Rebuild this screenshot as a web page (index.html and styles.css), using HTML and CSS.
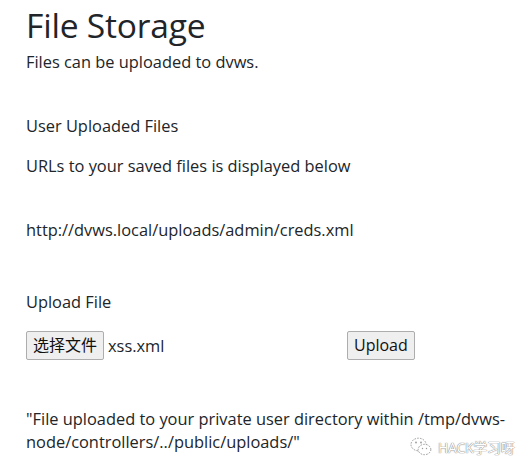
FILE: index.html
```html
<!DOCTYPE html>
<html>
<head>
<meta charset="utf-8">
<link rel="stylesheet" href="styles.css">
</head>
<body>
<div class="page">
  <h1 class="title">File Storage</h1>
  <p class="lead">Files can be uploaded to dvws.</p>
  <h4 class="sub first">User Uploaded Files</h4>
  <p class="text">URLs to your saved files is displayed below</p>
  <p class="url">http://dvws.local/uploads/admin/creds.xml</p>
  <h4 class="sub upload-title">Upload File</h4>
  <form class="upload-row">
    <div class="file-field">
      <span class="btn">选择文件</span>
      <span class="file-name">xss.xml</span>
    </div>
    <span class="btn">Upload</span>
  </form>
  <p class="result">"File uploaded to your private user directory within /tmp/dvws-node/controllers/../public/uploads/"</p>
</div>
<div class="watermark">
  <svg class="wm-icon" width="22" height="20" viewBox="0 0 22 20">
    <g fill="none" stroke="#9a9a9a" stroke-width="1" stroke-dasharray="1.6 1.2">
      <ellipse cx="8.5" cy="7.5" rx="7.5" ry="6.3"/>
      <ellipse cx="14.5" cy="12.5" rx="6.3" ry="5.2" fill="#fff"/>
    </g>
    <circle cx="6" cy="5.5" r="0.9" fill="#9a9a9a"/>
    <circle cx="11" cy="5.5" r="0.9" fill="#9a9a9a"/>
    <circle cx="12.5" cy="11.5" r="0.7" fill="#9a9a9a"/>
    <circle cx="16.5" cy="11.5" r="0.7" fill="#9a9a9a"/>
  </svg>
  <span class="wm-text">HACK学习呀</span>
</div>
</body>
</html>
```

FILE: styles.css
```css
html, body {
  margin: 0;
  padding: 0;
  background: #fff;
}
body {
  font-family: "Open Sans", "Noto Sans CJK SC", sans-serif;
  color: #212529;
  position: relative;
  width: 529px;
  height: 469px;
  overflow: hidden;
}
.page {
  padding: 0 17px 0 26px;
}
.title {
  font-size: 33.6px;
  font-weight: 400;
  margin: 0;
  padding-top: 3px;
  line-height: 44px;
  letter-spacing: -0.2px;
}
.lead,
.sub,
.text,
.url {
  font-size: 16.4px;
  font-weight: 400;
  line-height: 24px;
  margin: 0;
}
.lead {
  margin-top: 3px;
}
.first {
  margin-top: 40px;
}
.text {
  margin-top: 16px;
}
.url {
  margin-top: 40px;
}
.upload-title {
  margin-top: 48px;
}
.upload-row {
  display: flex;
  align-items: center;
  margin-top: 16px;
  height: 30px;
}
.file-field {
  display: flex;
  align-items: center;
  width: 321px;
}
.btn {
  display: inline-block;
  box-sizing: border-box;
  height: 29px;
  line-height: 27px;
  padding: 0 6px;
  font-size: 16px;
  border: 1px solid #adadad;
  border-radius: 2px;
  background: #efefef;
  color: #111;
  font-family: "Open Sans", "Noto Sans CJK SC", sans-serif;
}
.file-name {
  font-size: 16.4px;
  margin-left: 4px;
}
.result {
  font-size: 16.4px;
  line-height: 23px;
  margin: 47px 0 0;
}
.watermark {
  position: absolute;
  left: 410px;
  top: 437px;
  display: flex;
  align-items: center;
  gap: 6px;
}
.wm-text {
  font-size: 14px;
  color: #fff;
  font-family: "Noto Sans", "Noto Sans CJK SC", sans-serif;
  text-shadow: 0 0 1px #777, 0 0 1px #777;
  letter-spacing: -0.3px;
}
```
